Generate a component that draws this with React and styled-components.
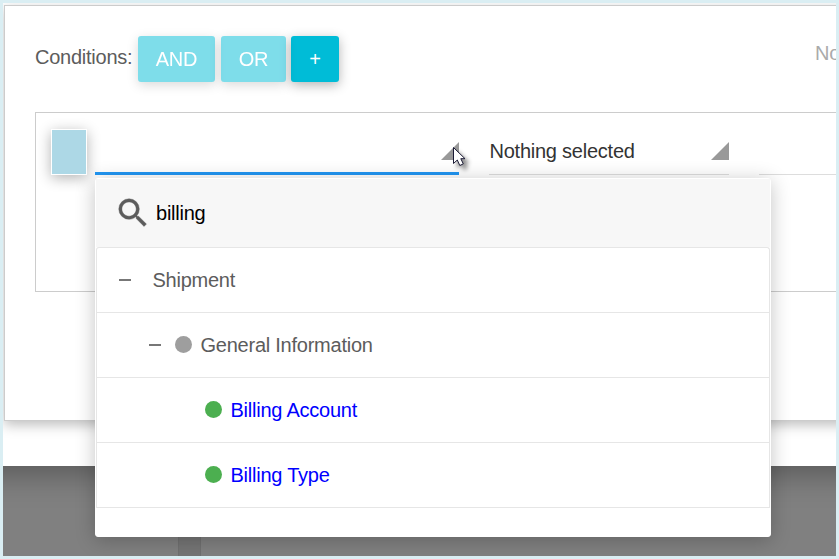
import React from "react";
import styled, { createGlobalStyle } from "styled-components";

const GlobalStyle = createGlobalStyle`
  *, *::before, *::after { box-sizing: border-box; }
  body { margin: 0; overflow: hidden; }
`;

const Frame = styled.div`
  position: relative;
  width: 839px;
  height: 559px;
  border: 3px solid #daeef3;
  background: #808080;
  overflow: hidden;
  font: 20px/24px "Liberation Sans", Arial, sans-serif;
  letter-spacing: -0.24px;
  color: #5c5c5c;
`;

const Viewport = styled.div`
  width: 833px;
  height: 553px;
  overflow: hidden;
`;

const Modal = styled.section`
  width: 900px;
  height: 463px;
  margin-left: -30px;
  padding: 2px 0 0 31px;
  background: #fff;
  box-shadow: 0 8px 30px rgba(0, 0, 0, 0.32);
`;

const Card = styled.div`
  width: 860px;
  height: 416px;
  padding: 30px 0 0 30px;
  border: 1px solid #ccc;
  background: #fff;
  box-shadow: 0 4px 12px rgba(0, 0, 0, 0.26);
`;

const Toolbar = styled.header`
  display: flex;
  align-items: flex-start;
  height: 76px;
`;

const Label = styled.span`
  width: 103px;
  padding-top: 9px;
`;

const Button = styled.button`
  width: ${(p) => p.$width}px;
  height: 46px;
  margin-right: ${(p) => p.$gap || 0}px;
  padding: 0;
  border: 0;
  border-radius: 3px;
  background: #00bcd7;
  color: #fff;
  font: inherit;
  letter-spacing: -0.3px;
  opacity: ${(p) => (p.$faded ? 0.5 : 1)};
  box-shadow: 0 3px 12px rgba(0, 0, 0, 0.3);
`;

const Note = styled.span`
  margin-left: 476px;
  padding-top: 5px;
  color: #aaa;
  white-space: nowrap;
`;

const Group = styled.div`
  display: flex;
  width: 900px;
  height: 180px;
  padding: 16px 0 0 15px;
  border: 1px solid #ccc;
`;

const Swatch = styled.div`
  width: 36px;
  height: 46px;
  margin-right: 8px;
  border: 1px solid #fff;
  background: #add8e6;
  box-shadow: 0 3px 14px rgba(0, 0, 0, 0.3);
`;

const Select = styled.div`
  display: flex;
  justify-content: space-between;
  width: ${(p) => p.$width}px;
  height: 46px;
  margin-right: 30px;
  padding: 10px 0 0 0.5px;
  border-bottom: ${(p) => (p.$active ? "3px solid #2196f3" : "1px solid #ddd")};
  color: #333;
`;

const Arrow = styled.svg`
  width: 18px;
  height: 18px;
  margin: 3px 0 0 auto;
  fill: #999;
`;

const Menu = styled.div`
  position: absolute;
  left: 92px;
  top: 175px;
  width: 676px;
  height: 359px;
  border: 1px solid #fff;
  border-radius: 3px;
  background: #fff;
  box-shadow: 0 3px 20px rgba(0, 0, 0, 0.24);
`;

const Search = styled.div`
  display: flex;
  align-items: center;
  height: 68px;
  padding: 0 0 0 18px;
  background: #f7f7f7;
  color: #000;
`;

const SearchIcon = styled.svg`
  width: 38px;
  height: 38px;
  margin-right: 4px;
  fill: #5c5c5c;
  stroke: #5c5c5c;
  stroke-width: 0.25px;
`;

const Tree = styled.div`
  width: 674px;
  background: #fff;
  border: 1px solid #e6e6e6;
  border-bottom: 0;
  border-radius: 3px 3px 0 0;
`;

const TreeRow = styled.div`
  display: flex;
  align-items: center;
  height: 65px;
  padding-left: ${(p) => p.$indent}px;
  border-bottom: 1px solid #e6e6e6;
  color: ${(p) => (p.$link ? "#00f" : "#5c5c5c")};
`;

const Minus = styled.span`
  width: 12px;
  height: 2px;
  margin: -1px ${(p) => p.$gap}px 0 0;
  background: #777;
`;

const Dot = styled.span`
  width: 17px;
  height: 17px;
  margin: -1px 8.5px 0 0;
  border-radius: 50%;
  background: ${(p) => p.$color};
`;

const Divider = styled.div`
  width: 23px;
  height: 90px;
  margin-left: 175px;
  background: #757575;
  border: solid #707070;
  border-width: 0 1px;
`;

const Cursor = styled.svg`
  position: absolute;
  left: 446px;
  top: 141px;
  width: 28px;
  height: 32px;
  filter: drop-shadow(4px 4px 2px rgba(0, 0, 0, 0.45));
`;

function Triangle() {
  return (
    <Arrow viewBox="0 0 18 18">
      <path d="M18 0v18H0z" />
    </Arrow>
  );
}

export default function App() {
  return (
    <Frame>
      <GlobalStyle />
      <Viewport>
        <Modal>
          <Card>
            <Toolbar>
              <Label>Conditions:</Label>
              <Button $width={77} $gap={6} $faded>AND</Button>
              <Button $width={65} $gap={5} $faded>OR</Button>
              <Button $width={48}>+</Button>
              <Note>No</Note>
            </Toolbar>
            <Group>
              <Swatch />
              <Select $width={364} $active><Triangle /></Select>
              <Select $width={240}>Nothing selected<Triangle /></Select>
              <Select $width={120} />
            </Group>
          </Card>
        </Modal>
        <Divider />
      </Viewport>
      <Menu>
        <Search>
          <SearchIcon viewBox="0 0 24 24">
            <path d="M15.5 14h-.79l-.28-.27A6.471 6.471 0 0 0 16 9.5 6.5 6.5 0 1 0 9.5 16c1.61 0 3.09-.59 4.23-1.57l.27.28v.79l5 4.99L20.49 19l-4.99-5zm-6 0C7.01 14 5 11.99 5 9.5S7.01 5 9.5 5 14 7.01 14 9.5 11.99 14 9.5 14z" />
          </SearchIcon>
          billing
        </Search>
        <Tree>
          <TreeRow $indent={22}><Minus $gap={21.5} />Shipment</TreeRow>
          <TreeRow $indent={52}><Minus $gap={14} /><Dot $color="#9e9e9e" />General Information</TreeRow>
          <TreeRow $indent={108} $link><Dot $color="#4caf50" />Billing Account</TreeRow>
          <TreeRow $indent={108} $link><Dot $color="#4caf50" />Billing Type</TreeRow>
        </Tree>
      </Menu>
      <Cursor viewBox="0 0 28 32">
        <path d="M4.5 3.5v16l3.8-3.5 2.5 5.5 3.5-1.6-2.5-5.2h4.2z" fill="#fff" stroke="#1b1b35" />
      </Cursor>
    </Frame>
  );
}
